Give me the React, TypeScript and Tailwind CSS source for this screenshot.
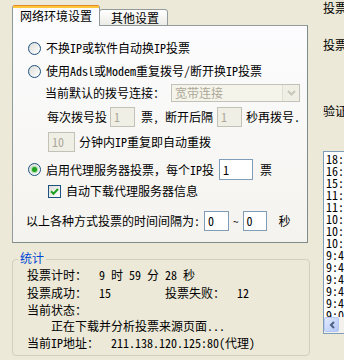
import React from "react";

const Radio = ({ checked = false }: { checked?: boolean }) => (
  <div className="h-[13px] w-[13px] shrink-0 rounded-full border border-[#1C5180] bg-gradient-to-br from-[#DCDCD7] to-white flex items-center justify-center">
    {checked && (
      <div className="h-[5px] w-[5px] rounded-full bg-[#21A121] shadow-[0_0_1px_1px_#9FDB9F]" />
    )}
  </div>
);

const Check = () => (
  <div className="h-[13px] w-[13px] shrink-0 border border-[#1C5180] bg-gradient-to-br from-[#DCDCD7] to-white flex items-center justify-center">
    <svg width="9" height="9" viewBox="0 0 9 9">
      <path d="M1 4.2 L3.5 6.7 L8 2" fill="none" stroke="#21A121" strokeWidth="2" />
    </svg>
  </div>
);

const Box = ({
  value,
  w,
  disabled = false,
  h = "h-[20px]",
}: {
  value: string;
  w: string;
  disabled?: boolean;
  h?: string;
}) => (
  <div
    className={`${w} ${h} shrink-0 border px-[3px] flex items-center ${
      disabled
        ? "border-[#C4C2B6] bg-[#F0EFE6] text-[#ACA899]"
        : "border-[#7F9DB9] bg-white text-black"
    }`}
  >
    {value}
  </div>
);

const logLines = [
  "18:42:11",
  "16:05:37",
  "15:20:48",
  "11:56:02",
  "11:13:29",
  "10:51:44",
  "10:32:18",
  "10:07:55",
  "9:49:31",
  "9:47:20",
  "9:45:06",
  "9:43:52",
  "9:41:17",
  "9:08:40",
];

export default function App() {
  return (
    <div className="h-[360px] w-[344px] overflow-hidden bg-[#ECE9D8] text-[12px] leading-none text-black font-['Noto_Sans_Mono_CJK_SC','Noto_Sans_CJK_SC',monospace] flex">
      {/* left column */}
      <div className="w-[310px] shrink-0 pl-[12px] pt-[5px] flex flex-col">
        {/* tabs */}
        <div className="relative z-10 -mb-px flex items-end h-[21px]">
          <div className="h-[21px] w-[88px] rounded-t-[3px] border-x border-t border-x-[#919B9C] border-t-[#E68B2C] bg-[#FCFCFE] flex flex-col">
            <div className="h-[2px] bg-[#FFC73C]" />
            <div className="flex-1 flex items-center pl-[7px] pb-[2px]">网络环境设置</div>
          </div>
          <div className="-ml-px h-[17px] w-[69px] rounded-t-[3px] border border-[#919B9C] bg-gradient-to-b from-white to-[#ECEBE6] flex items-center pl-[11px]">
            其他设置
          </div>
        </div>

        {/* panel */}
        <div className="h-[218px] w-[296px] border border-[#919B9C] border-r-[#7F8A8B] border-b-[#7F8A8B] bg-gradient-to-b from-[#FCFCFE] to-[#F4F3EE] pt-[14px] flex flex-col">
          <div className="h-[16px] pl-[15px] flex items-center gap-[5px]">
            <Radio />
            <span>不换IP或软件自动换IP投票</span>
          </div>
          <div className="mt-[7px] h-[16px] pl-[15px] flex items-center gap-[5px]">
            <Radio />
            <span>使用Adsl或Modem重复拨号/断开换IP投票</span>
          </div>
          <div className="mt-[5px] h-[18px] pl-[32px] flex items-center">
            <span className="w-[126px]">当前默认的拨号连接：</span>
            <div className="h-[18px] w-[129px] border border-[#C4C2B6] bg-[#F5F4EA] flex items-center">
              <span className="flex-1 pl-[3px] text-[#ACA899]">宽带连接</span>
              <div className="h-[16px] w-[17px] border-l border-[#E2E0D4] bg-[#F0EFE6] flex items-center justify-center">
                <svg width="9" height="6" viewBox="0 0 9 6">
                  <path d="M1 1 L4.5 4.5 L8 1" fill="none" stroke="#C9C7BA" strokeWidth="2" />
                </svg>
              </div>
            </div>
          </div>
          <div className="mt-[5px] h-[20px] pl-[34px] flex items-center">
            <span>每次拨号投</span>
            <div className="ml-[3px]">
              <Box value="1" w="w-[25px]" disabled />
            </div>
            <span className="ml-[6px]">票, 断开后隔</span>
            <div className="ml-[4px]">
              <Box value="1" w="w-[25px]" disabled />
            </div>
            <span className="ml-[4px]">秒再拨号.</span>
          </div>
          <div className="mt-[5px] h-[20px] pl-[35px] flex items-center">
            <Box value="10" w="w-[27px]" disabled />
            <span className="ml-[4px]">分钟内IP重复即自动重拨</span>
          </div>
          <div className="mt-[7px] h-[21px] pl-[15px] flex items-center">
            <Radio checked />
            <span className="ml-[5px]">启用代理服务器投票，每个IP投</span>
            <div className="ml-[5px]">
              <Box value="1" w="w-[34px]" h="h-[21px]" />
            </div>
            <span className="ml-[7px]">票</span>
          </div>
          <div className="mt-[3px] h-[16px] pl-[35px] flex items-center gap-[5px]">
            <Check />
            <span>自动下载代理服务器信息</span>
          </div>
          <div className="mt-[12px] h-[20px] pl-[13px] flex items-center">
            <span>以上各种方式投票的时间间隔为:</span>
            <div className="ml-[4px]">
              <Box value="0" w="w-[25px]" />
            </div>
            <span className="mx-[4px] text-[11px]">~</span>
            <Box value="0" w="w-[24px]" />
            <span className="ml-[12px]">秒</span>
          </div>
        </div>

        {/* statistics group */}
        <div className="mt-[16px] h-[97px] w-[298px] rounded-[4px] border border-[#D0D0BF] flex flex-col">
          <div className="-mt-[9px] ml-[5px] self-start bg-[#ECE9D8] px-[2px] h-[14px] flex items-center text-[#0046D5]">
            统计
          </div>
          <div className="pl-[14px] whitespace-pre flex flex-col">
            <div className="mt-[2px] h-[16px] flex items-center">投票计时：  9 时 59 分 28 秒</div>
            <div className="mt-[2px] h-[16px] flex items-center">投票成功：  15         投票失败：  12</div>
            <div className="mt-[1px] h-[16px] flex items-center">当前状态：</div>
            <div className="h-[16px] flex items-center pl-[24px]">正在下载并分析投票来源页面...</div>
            <div className="mt-[1px] h-[16px] flex items-center">当前IP地址：  211.138.120.125:80(代理)</div>
          </div>
        </div>
      </div>

      {/* right column (clipped) */}
      <div className="flex-1 min-w-0 pl-[13px] flex flex-col whitespace-nowrap">
        <div className="mt-[2px] h-[12px] flex items-center">投票</div>
        <div className="mt-[25px] h-[12px] flex items-center">投票</div>
        <div className="mt-[54px] h-[12px] flex items-center">验证</div>
        <div className="mt-[34px] h-[183px] w-[40px] border border-[#7F9DB9] bg-white flex flex-col overflow-hidden">
          <div className="flex-1 overflow-hidden pl-[2px] pt-[1px] flex flex-col">
            {logLines.map((t, i) => (
              <div key={i} className="h-[12px] shrink-0 flex items-center">
                {t}
              </div>
            ))}
          </div>
          <div className="h-[16px] shrink-0 bg-[#F3F1EC] flex">
            <div className="h-[15px] w-[15px] rounded-[2px] border border-[#B4C8F6] bg-gradient-to-br from-[#E1EAFE] to-[#B4C8F6] flex items-center justify-center">
              <svg width="6" height="8" viewBox="0 0 6 8">
                <path d="M5 1 L2 4 L5 7" fill="none" stroke="#4D6185" strokeWidth="2" />
              </svg>
            </div>
          </div>
        </div>
      </div>
    </div>
  );
}
